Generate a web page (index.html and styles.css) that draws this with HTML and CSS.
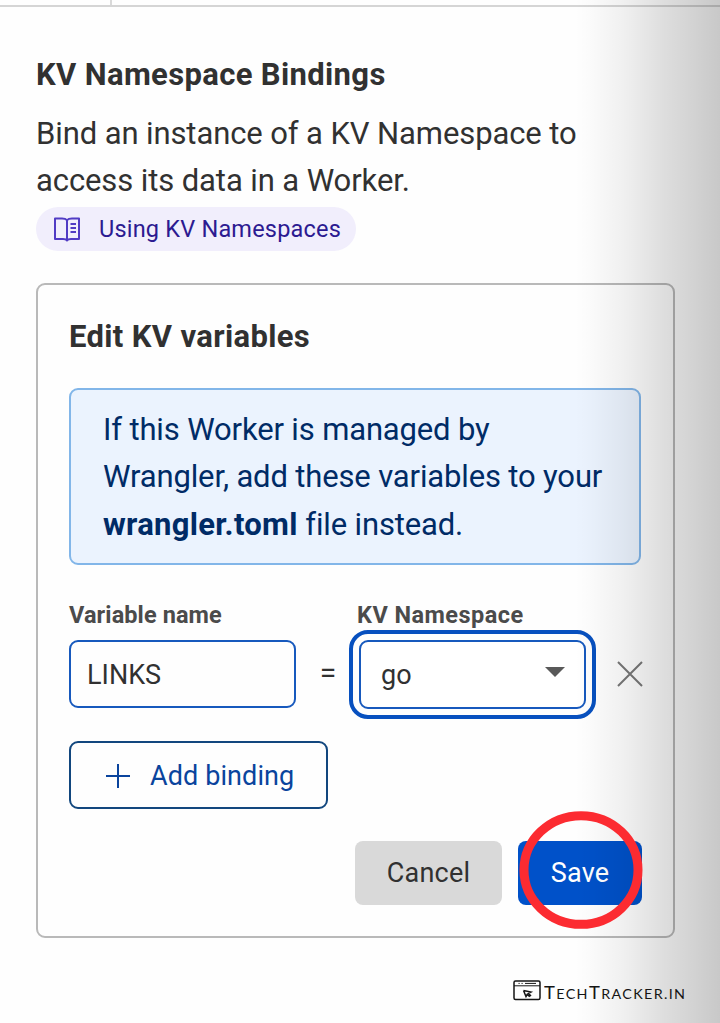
FILE: index.html
```html
<!DOCTYPE html>
<html lang="en">
<head>
<meta charset="utf-8">
<title>KV Namespace Bindings</title>
<link rel="stylesheet" href="styles.css">
</head>
<body>
<div class="tabs"><div class="tab"></div></div>
<main class="page">
  <h1 class="title"><span>KV Namespace Bindings</span></h1>
  <p class="intro"><span>Bind an instance of a KV Namespace to</span><br><span>access its data in a Worker.</span></p>
  <a class="pill">
    <svg class="book" viewBox="0 0 28 26"><path d="M14 4.200C12.500 2.500 10.500 2.500 9 2.500H2V23h8c2 0 3.300.200 4 1.500 .7-1.300 2-1.500 4-1.500h8V2.500h-7c-1.500 0-3.500 0-5 1.700V24M17.500 8H23M17.500 12H23M17.500 16H23"/></svg>
    <span>Using KV Namespaces</span>
  </a>
  <section class="card">
    <h2 class="card-title"><span>Edit KV variables</span></h2>
    <div class="notice"><span>If this Worker is managed by</span><br><span>Wrangler, add these variables to your</span><br><b>wrangler.toml</b><span> file instead.</span></div>
    <div class="fields">
      <div class="field">
        <div class="label"><span>Variable name</span></div>
        <div class="input"><span>LINKS</span></div>
      </div>
      <div class="equals">=</div>
      <div class="field namespace">
        <div class="label"><span>KV Namespace</span></div>
        <div class="input select"><span>go</span><svg class="caret" viewBox="0 0 20 10"><path d="M0 0h20L10 10z"/></svg></div>
      </div>
      <svg class="remove" viewBox="0 0 26 26"><path d="M1 1l24 24M25 1L1 25"/></svg>
    </div>
    <div class="add"><svg class="plus" viewBox="0 0 24 24"><path d="M12 0v24M0 12h24"/></svg><span>Add binding</span></div>
    <div class="actions">
      <div class="button cancel"><span>Cancel</span></div>
      <div class="button save"><span>Save</span></div>
    </div>
  </section>
</main>
<div class="shade"></div>
<svg class="ring" viewBox="0 0 124 120"><ellipse cx="62" cy="60" rx="57" ry="54.300"/></svg>
<footer class="brand">
  <svg class="window" viewBox="0 0 28 21"><rect x="1" y="1" width="26" height="18.500" rx="1.500"/><path d="M1 5.800h26" stroke-width="1"/><path d="M5.500 3.400h1.200M8.500 3.400h1.200M12 3.400h11" stroke-width="1"/><path d="M10.500 10.500l7.500 1.500-2.500 1.400 2.500 2.600M10.500 10.500l2.500 6 1.200-2 2.600 2.300"/></svg>
  <span class="wordmark">T<small>ECH</small>T<small>RACKER.IN</small></span>
</footer>
</body>
</html>
```

FILE: styles.css
```css
* { box-sizing: border-box; }
body {
  margin: 0;
  position: relative;
  height: 1023px;
  overflow: hidden;
  background: #fefefe;
  color: #313131;
  font-family: Roboto, sans-serif;
}
h1, h2, p { margin: 0; }
svg { display: block; flex: none; fill: none; }
.tabs { height: 7px; border-bottom: 2px solid #d5d5d5; }
.tab { width: 112px; height: 5px; border-right: 2px solid #d9d9d9; }
.page { padding: 44px 45px 0 36px; }
.title, .card-title { font-size: 31px; line-height: 47px; font-weight: 700; letter-spacing: .35px; }
.intro { margin-top: 12px; font-size: 31px; line-height: 47px; letter-spacing: -.1px; }
.pill {
  display: flex;
  align-items: center;
  width: 320px;
  height: 44px;
  margin-top: 3px;
  padding-left: 17px;
  gap: 18px;
  border-radius: 22px;
  background: #f1eefc;
  color: #2c1a91;
  font-size: 23.500px;
  letter-spacing: .2px;
}
.book { width: 28px; height: 26px; stroke: #513bc4; stroke-width: 2; stroke-linejoin: round; }
.card {
  height: 655px;
  margin-top: 32px;
  padding: 28px 32px 0 31px;
  border: 2px solid #b9b9b9;
  border-radius: 9px;
}
.notice {
  height: 177px;
  margin-top: 28px;
  padding: 16px 32px;
  border: 2px solid #82b6e9;
  border-radius: 9px;
  background: #ebf3fe;
  color: #002b66;
  font-size: 31px;
  line-height: 47.300px;
  letter-spacing: -.15px;
  white-space: nowrap;
}
.notice b { letter-spacing: .3px; }
.fields { display: flex; margin-top: 34px; }
.field { flex: none; width: 227px; }
.namespace { width: 229px; }
.label { height: 41px; line-height: 32px; font-size: 23.500px; font-weight: 700; color: #4b4b4b; letter-spacing: .1px; white-space: nowrap; }
.namespace .label { letter-spacing: .45px; }
.input {
  display: flex;
  align-items: center;
  height: 68px;
  padding: 2px 0 0 16px;
  border: 2px solid #1759bd;
  border-radius: 9px;
  font-size: 27px;
}
.select {
  height: 69px;
  justify-content: space-between;
  padding: 0 19px 0 20px;
  margin-left: 2px;
  background: #fff;
  outline: 4px solid #0750bf;
  outline-offset: 6px;
}
.equals { flex: none; width: 61px; padding: 57px 0 0 3px; text-align: center; font-size: 30px; line-height: 34px; }
.caret { width: 20px; height: 10px; margin-bottom: 5px; fill: #595959; }
.remove { width: 26px; height: 26px; margin: 62px 0 0 31px; stroke: #777; stroke-width: 2; }
.add {
  display: flex;
  align-items: center;
  width: 259px;
  height: 68px;
  margin-top: 32px;
  padding: 2px 0 0 35px;
  gap: 20px;
  border: 2px solid #12477e;
  border-radius: 9px;
  color: #0a449d;
  font-size: 27px;
  letter-spacing: .1px;
}
.plus { width: 24px; height: 24px; stroke: #0a449d; stroke-width: 2; }
.actions { display: flex; justify-content: flex-end; gap: 16px; margin: 32px -1px 0 0; }
.button { display: flex; align-items: center; justify-content: center; height: 64px; border-radius: 8px; font-size: 27px; letter-spacing: .2px; }
.cancel { width: 147px; background: #d9d9d9; }
.save { width: 124px; background: #0051c9; color: #fff; }
.shade {
  position: absolute;
  inset: 0 0 0 575px;
  background: linear-gradient(90deg, transparent, rgba(0,0,0,.015) 12%, rgba(0,0,0,.055) 33%, rgba(0,0,0,.13) 62%, rgba(0,0,0,.21));
}
.ring { position: absolute; left: 519px; top: 809.500px; width: 124px; height: 120px; stroke: #fc2b31; stroke-width: 9; }
.brand { position: absolute; left: 513px; top: 980px; display: flex; color: #151515; }
.window { width: 28px; height: 21px; stroke: #151515; stroke-width: 1.500; }
.wordmark { margin-left: 3px; font: 16.500px/26px Lato, sans-serif; letter-spacing: 1.200px; white-space: nowrap; transform: scaleX(1.12); transform-origin: left; }
.wordmark small { font-size: 12.800px; }
```
